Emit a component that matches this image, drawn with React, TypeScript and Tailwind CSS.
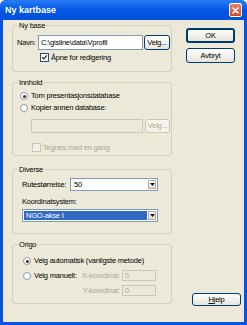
import type { ReactNode } from "react";

const FONT = {
  fontFamily: "Tahoma, 'Liberation Sans', Arial, sans-serif",
};

function GroupBox({ label, className, children }: { label: string; className?: string; children: ReactNode }) {
  return (
    <div className={"flex flex-col rounded-[3px] border border-[#D0D0BF] " + (className ?? "")}>
      <div className="-mt-[6px] ml-[5px] h-[11px] w-fit bg-[#ECE9D8] px-[1px] leading-[11px]">{label}</div>
      {children}
    </div>
  );
}

function XpButton({ children, className, disabled }: { children: ReactNode; className?: string; disabled?: boolean }) {
  return (
    <div
      className={
        "flex items-center justify-center rounded-[3px] border leading-none " +
        (disabled
          ? "border-[#C9C7BA] bg-[#F5F4EA] text-[#ACA899] "
          : "border-[#003C74] bg-gradient-to-b from-white to-[#E6E4DA] text-black ") +
        (className ?? "")
      }
    >
      {children}
    </div>
  );
}

function Radio({ checked, disabled }: { checked?: boolean; disabled?: boolean }) {
  return (
    <div
      className={
        "flex h-[8px] w-[8px] shrink-0 items-center justify-center rounded-full border " +
        (disabled ? "border-[#CAC8BB] bg-[#F2F1EA]" : "border-[#8A9BAA] bg-white")
      }
    >
      {checked && <div className="h-[3px] w-[3px] rounded-full bg-[#333]" />}
    </div>
  );
}

function Check({ checked, disabled }: { checked?: boolean; disabled?: boolean }) {
  return (
    <div
      className={
        "flex h-[9px] w-[9px] shrink-0 items-center justify-center border " +
        (disabled ? "border-[#CAC8BB] bg-[#F2F1EA]" : "border-[#1C5180] bg-white")
      }
    >
      {checked && (
        <svg viewBox="0 0 9 9" className="h-[7px] w-[7px]">
          <path d="M1.5 4.2 L3.5 6.3 L7.5 1.8" stroke="#222" strokeWidth="1.6" fill="none" />
        </svg>
      )}
    </div>
  );
}

function Combo({ value, selected, className }: { value: string; selected?: boolean; className?: string }) {
  return (
    <div className={"flex h-[13px] items-stretch border border-[#7F9DB9] bg-white p-[1px] " + (className ?? "")}>
      <div
        className={
          "flex flex-1 items-center pl-[2px] leading-none " + (selected ? "bg-[#316AC5] text-white" : "text-black")
        }
      >
        {value}
      </div>
      <div className="ml-[1px] flex w-[8px] items-center justify-center border border-[#B0B0A8] bg-gradient-to-b from-white to-[#DCDAD0]">
        <svg viewBox="0 0 5 3" className="h-[3px] w-[5px]">
          <path d="M0 0 H5 L2.5 3 Z" fill="#111" />
        </svg>
      </div>
    </div>
  );
}

export default function App() {
  return (
    <div
      style={FONT}
      className="flex h-[325px] w-[247px] flex-col overflow-hidden whitespace-nowrap rounded-t-[6px] bg-[#0553E1] text-[7.5px] tracking-[-0.2px] text-black"
    >
      {/* title bar */}
      <div className="flex h-[20px] shrink-0 items-center justify-between bg-gradient-to-b from-[#2A7CF5] via-[#0058E6] to-[#0250DA] pl-[5px] pr-[5px]">
        <span className="text-[9px] font-bold leading-none tracking-normal text-white">Ny kartbase</span>
        <div className="flex h-[14px] w-[13px] items-center justify-center rounded-[2px] border border-white bg-gradient-to-b from-[#E8866A] to-[#C9441E]">
          <svg viewBox="0 0 7 7" className="h-[7px] w-[7px]">
            <path d="M1 1 L6 6 M6 1 L1 6" stroke="white" strokeWidth="1.6" strokeLinecap="round" />
          </svg>
        </div>
      </div>

      {/* body */}
      <div className="mx-[3px] mb-[3px] flex flex-1 bg-[#ECE9D8]">
        {/* left column */}
        <div className="ml-[9px] flex w-[160px] flex-col">
          <GroupBox label="Ny base" className="mt-[5px] h-[47px]">
            <div className="mt-[4px] flex h-[15px] items-center pl-[4px]">
              <span className="w-[21px]">Navn:</span>
              <div className="flex h-[15px] w-[105px] items-center border border-[#7F9DB9] bg-white pl-[2px] leading-none">
                C:\gisline\data\Vprofil
              </div>
              <XpButton className="ml-[1px] h-[15px] w-[26px]">Velg...</XpButton>
            </div>
            <div className="mt-[3px] flex h-[9px] items-center gap-[2px] pl-[27px]">
              <Check checked />
              <span className="leading-none">Åpne for redigering</span>
            </div>
          </GroupBox>

          <GroupBox label="Innhold" className="mt-[10px] h-[74px]">
            <div className="mt-[3px] flex h-[10px] items-center gap-[3px] pl-[7px]">
              <Radio checked />
              <span className="leading-none">Tom presentasjonsdatabase</span>
            </div>
            <div className="mt-[2px] flex h-[10px] items-center gap-[3px] pl-[7px]">
              <Radio />
              <span className="leading-none">Kopier annen database:</span>
            </div>
            <div className="mt-[6px] flex h-[14px] items-center pl-[18px]">
              <div className="h-[14px] w-[112px] border border-[#C9C7BA] bg-[#ECE9D8]" />
              <XpButton disabled className="ml-[2px] h-[14px] w-[25px]">
                Velg...
              </XpButton>
            </div>
            <div className="mt-[10px] flex h-[9px] items-center gap-[2px] pl-[19px] text-[#ACA899]">
              <Check disabled />
              <span className="leading-none">Tegnes med en gang</span>
            </div>
          </GroupBox>

          <GroupBox label="Diverse" className="mt-[13px] h-[65px]">
            <div className="mt-[3px] flex h-[13px] items-center pl-[9px]">
              <span className="w-[48px] leading-none">Rutestørrelse:</span>
              <Combo value="50" className="w-[88px]" />
            </div>
            <div className="mt-[6px] flex h-[10px] items-center pl-[9px] leading-none">Koordinatsystem:</div>
            <div className="mt-[2px] pl-[9px]">
              <Combo value="NGO-akse I" selected className="w-[136px]" />
            </div>
          </GroupBox>

          <GroupBox label="Origo" className="mt-[10px] h-[60px]">
            <div className="mt-[6px] flex h-[10px] items-center gap-[3px] pl-[10px]">
              <Radio checked />
              <span className="leading-none">Velg automatisk (vanligste metode)</span>
            </div>
            <div className="mt-[4px] flex pl-[10px]">
              <div className="flex h-[11px] w-[57px] items-center gap-[3px]">
                <Radio />
                <span className="leading-none">Velg manuelt:</span>
              </div>
              <div className="grid grid-cols-[40px_34px] items-center gap-x-[2px] gap-y-[4px] text-[#ACA899]">
                <span className="text-right leading-none">X-koordinat:</span>
                <div className="flex h-[11px] items-center border border-[#C9C7BA] bg-[#ECE9D8] pl-[2px] leading-none">0</div>
                <span className="text-right leading-none">Y-koordinat:</span>
                <div className="flex h-[11px] items-center border border-[#C9C7BA] bg-[#ECE9D8] pl-[2px] leading-none">0</div>
              </div>
            </div>
          </GroupBox>
        </div>

        {/* right column */}
        <div className="ml-[14px] flex flex-1 flex-col">
          <XpButton className="mt-[8px] h-[15px] w-[49px] border-2 border-[#003C74]">OK</XpButton>
          <XpButton className="mt-[5px] h-[15px] w-[49px]">Avbryt</XpButton>
          <XpButton className="mb-[16px] ml-[6px] mt-auto h-[13px] w-[49px]">
            <span>
              <span className="underline">H</span>jelp
            </span>
          </XpButton>
        </div>
      </div>
    </div>
  );
}
